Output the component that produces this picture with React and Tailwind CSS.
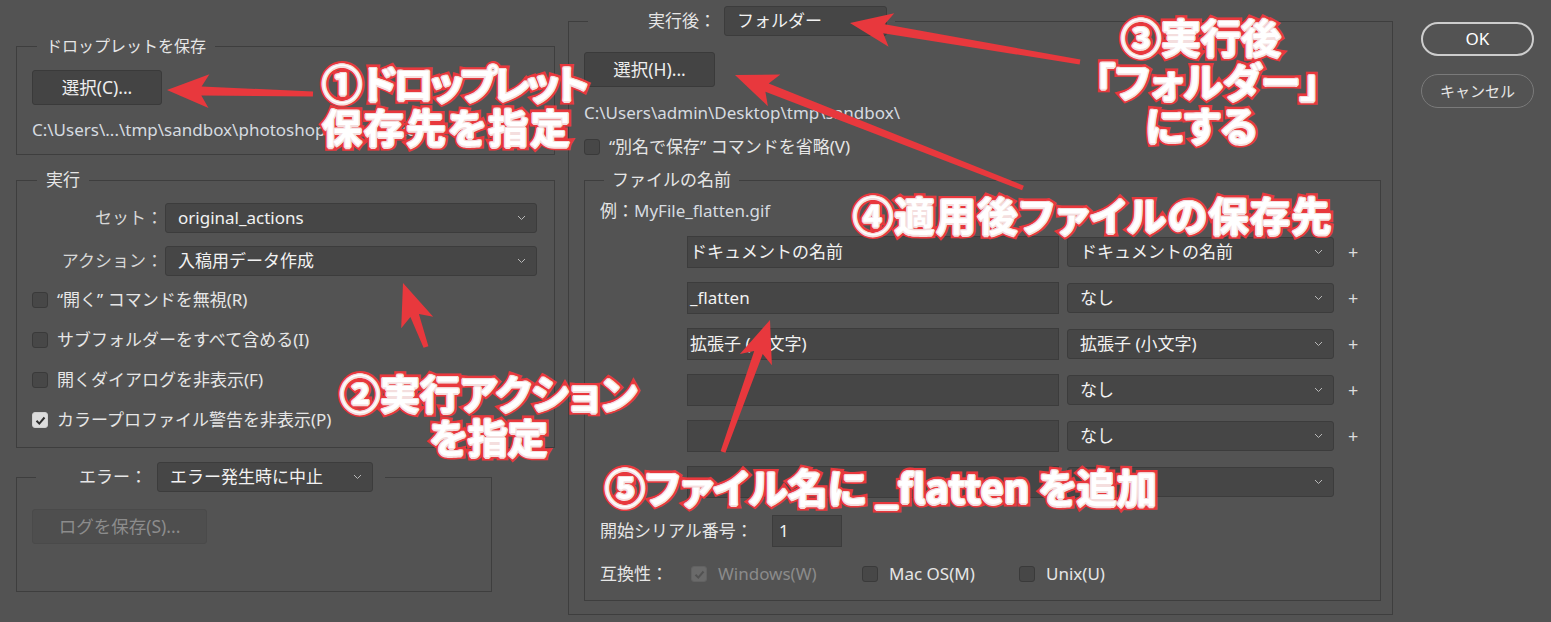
import React from 'react';

// Photoshop "バッチ / ドロップレットを作成" dialog with red annotations on top

const ui = "font-['Noto_Sans','Noto_Sans_CJK_JP',sans-serif]";

function Chevron() {
  return (
    <svg width="9" height="6" viewBox="0 0 9 6" className="shrink-0">
      <path d="M1 1l3.5 3.5L8 1" fill="none" stroke="#b8b8b8" strokeWidth="1" />
    </svg>
  );
}

function Select({ value, className = '' }) {
  return (
    <div
      className={`flex items-center justify-between rounded-[3px] border border-[#3c3c3c] bg-[#464646] pl-3 pr-2.5 text-[17px] text-[#f2f2f2] ${className}`}
    >
      <span className="truncate">{value}</span>
      <Chevron />
    </div>
  );
}

function Field({ value, className = '' }) {
  return (
    <div
      className={`flex h-8 items-center border border-[#3c3c3c] bg-[#464646] pl-[2px] text-[17px] text-[#f2f2f2] ${className}`}
    >
      {value}
    </div>
  );
}

function Check({ checked = false, disabled = false }) {
  const box = checked
    ? disabled
      ? 'bg-[#6a6a6a] border-[#626262]'
      : 'bg-[#dcdcdc] border-[#cfcfcf]'
    : 'bg-[#474747] border-[#3a3a3a]';
  return (
    <div className={`flex h-4 w-4 shrink-0 items-center justify-center rounded-[3px] border ${box}`}>
      {checked && (
        <svg width="11" height="11" viewBox="0 0 11 11">
          <path
            d="M1.5 5.8l2.8 2.8L9.5 2.5"
            fill="none"
            stroke={disabled ? '#525252' : '#2e2e2e'}
            strokeWidth="2"
          />
        </svg>
      )}
    </div>
  );
}

function CheckRow({ label, checked }) {
  return (
    <div className="flex h-6 items-center">
      <Check checked={checked} />
      <span className="ml-[9px] text-[#e6e6e6]">{label}</span>
    </div>
  );
}

function Button({ children, className = '', disabled = false }) {
  return (
    <button
      disabled={disabled}
      className={`h-[35px] rounded-[3px] border text-[17.5px] ${
        disabled
          ? 'border-[#4a4a4a] bg-[#4e4e4e] text-[#8c8c8c]'
          : 'border-[#3a3a3a] bg-[#444444] text-[#eeeeee]'
      } ${className}`}
    >
      {children}
    </button>
  );
}

function NameRow({ text, option, plus = true }) {
  return (
    <div className="flex h-8 items-center">
      <Field value={text} className="w-[372px]" />
      <Select value={option} className="ml-2 h-[30px] w-[267px]" />
      {plus && <span className="ml-[14px] text-[18px] leading-none text-[#dcdcdc]">+</span>}
    </div>
  );
}

function arrowPoints([x1, y1], [x2, y2], head = 42, half = 17, w0 = 2.5, w1 = 4.5) {
  const dx = x2 - x1;
  const dy = y2 - y1;
  const len = Math.hypot(dx, dy);
  const ux = dx / len;
  const uy = dy / len;
  const nx = -uy;
  const ny = ux;
  const bx = x2 - ux * head;
  const by = y2 - uy * head;
  const jx = x2 - ux * head * 0.82;
  const jy = y2 - uy * head * 0.82;
  const pts = [
    [x1 + nx * w0, y1 + ny * w0],
    [jx + nx * w1, jy + ny * w1],
    [bx + nx * half, by + ny * half],
    [x2, y2],
    [bx - nx * half, by - ny * half],
    [jx - nx * w1, jy - ny * w1],
    [x1 - nx * w0, y1 - ny * w0],
  ];
  return pts.map((p) => p.map((v) => v.toFixed(1)).join(',')).join(' ');
}

const arrows = [
  [[313, 94], [167, 90]],
  [[426, 347], [403, 283]],
  [[1080, 62], [850, 23]],
  [[1023, 188], [735, 75]],
  [[723, 452], [770, 320]],
];

// white lettering, red outline, thin light halo
function Note({ className = '', children }) {
  return (
    <div
      className={`pointer-events-none absolute whitespace-nowrap font-['Noto_Sans_CJK_JP',sans-serif] text-[40px] font-bold leading-[44px] text-white [font-feature-settings:'palt'] [paint-order:stroke_fill] [-webkit-text-stroke:7px_#e8383d] [text-shadow:1.5px_0_#f4dede,-1.5px_0_#f4dede,0_1.5px_#f4dede,0_-1.5px_#f4dede,1px_1px_#f4dede,-1px_-1px_#f4dede,1px_-1px_#f4dede,-1px_1px_#f4dede] ${className}`}
    >
      {children}
    </div>
  );
}

export default function App() {
  return (
    <div className={`relative flex h-[622px] w-[1551px] overflow-hidden bg-[#535353] text-[17px] text-[#e6e6e6] ${ui}`}>
      {/* left column */}
      <div className="ml-4 mt-[36px] flex w-[539px] flex-col items-start">
        <fieldset className="w-full border border-[#3e3e3e] pb-[14px] pl-[15px]">
          <legend className="ml-[5px] px-[9px] text-[16px] leading-5">ドロップレットを保存</legend>
          <Button className="mt-[14px] w-[130px]">選択(C)...</Button>
          <div className="mt-[15px] leading-5 text-[#d6dbe0]">{'C:\\Users\\...\\tmp\\sandbox\\photoshop\\flatten.exe'}</div>
        </fieldset>

        <fieldset className="mt-[15px] w-full border border-[#3e3e3e] pb-[15px] pl-[15px] pr-[17px]">
          <legend className="ml-[5px] px-[9px] leading-5">実行</legend>
          <div className="mt-[13px] flex items-center">
            <span className="w-[133px] pr-[2px] text-right text-[#d8d8d8]">セット：</span>
            <Select value="original_actions" className="h-[30px] flex-1" />
          </div>
          <div className="mt-[13px] flex items-center">
            <span className="w-[133px] pr-[2px] text-right text-[#d8d8d8]">アクション：</span>
            <Select value="入稿用データ作成" className="h-[30px] flex-1" />
          </div>
          <div className="mt-[12px] flex flex-col gap-[16px]">
            <CheckRow label="“開く” コマンドを無視(R)" />
            <CheckRow label="サブフォルダーをすべて含める(I)" />
            <CheckRow label="開くダイアログを非表示(F)" />
            <CheckRow label="カラープロファイル警告を非表示(P)" checked />
          </div>
        </fieldset>

        <fieldset className="mt-[14px] w-[476px] border border-[#3e3e3e] pb-[47px] pl-[15px]">
          <legend className="ml-[4px] px-3">
            <div className="flex items-center">
              <span className="w-[99px] text-right">エラー：</span>
              <Select value="エラー発生時に中止" className="ml-[10px] h-[30px] w-[216px]" />
            </div>
          </legend>
          <Button disabled className="mt-[17px] w-[175px]">ログを保存(S)...</Button>
        </fieldset>
      </div>

      {/* middle column */}
      <div className="ml-[13px] mt-[6px] flex w-[825px] flex-col">
        <fieldset className="border border-[#3e3e3e] pb-[13px] pl-[15px] pr-[11px]">
          <legend className="ml-[4px] px-2">
            <div className="flex items-center">
              <span className="w-[120px] text-right">実行後：</span>
              <Select value="フォルダー" className="ml-2 h-[30px] w-[163px]" />
            </div>
          </legend>
          <Button className="mt-[16px] w-[131px]">選択(H)...</Button>
          <div className="mt-[16px] leading-5 text-[#d6dbe0]">{'C:\\Users\\admin\\Desktop\\tmp\\sandbox\\'}</div>
          <div className="mt-[12px]">
            <CheckRow label="“別名で保存” コマンドを省略(V)" />
          </div>

          <fieldset className="mt-[11px] border border-[#3e3e3e] pb-[14px] pl-[15px]">
            <legend className="ml-[4px] px-[8px] leading-5">ファイルの名前</legend>
            <div className="mt-[11px] leading-5">
              例：<span className="text-[#d6dbe0]">MyFile_flatten.gif</span>
            </div>
            <div className="mt-[15px] flex flex-col gap-[14px] pl-[87px]">
              <NameRow text="ドキュメントの名前" option="ドキュメントの名前" />
              <NameRow text="_flatten" option="なし" />
              <NameRow text="拡張子 (小文字)" option="拡張子 (小文字)" />
              <NameRow text="" option="なし" />
              <NameRow text="" option="なし" />
              <NameRow text="" option="なし" plus={false} />
            </div>
            <div className="mt-[17px] flex items-center">
              <span className="w-[172px]">開始シリアル番号：</span>
              <Field value="1" className="w-[70px] pl-[6px]" />
            </div>
            <div className="mt-[15px] flex h-6 items-center">
              <span className="w-[91px]">互換性：</span>
              <div className="flex w-[171px] items-center">
                <Check checked disabled />
                <span className="ml-[11px] text-[#8b8b8b]">Windows(W)</span>
              </div>
              <div className="flex w-[157px] items-center">
                <Check />
                <span className="ml-[11px]">Mac OS(M)</span>
              </div>
              <div className="flex items-center">
                <Check />
                <span className="ml-[11px]">Unix(U)</span>
              </div>
            </div>
          </fieldset>
        </fieldset>
      </div>

      {/* right column */}
      <div className="ml-[28px] mt-[22px] flex w-[113px] flex-col gap-[18px]">
        <button className="h-[34px] rounded-full border-2 border-[#cdcdcd] text-[17px] text-white">OK</button>
        <button className="h-[34px] rounded-full border-[1.5px] border-[#7a7a7a] text-[15px] text-[#e6e6e6]">キャンセル</button>
      </div>

      {/* annotations */}
      <svg className="pointer-events-none absolute inset-0" width="1551" height="622">
        {arrows.map(([a, b], i) => (
          <polygon key={i} points={arrowPoints(a, b)} fill="#e8383d" />
        ))}
      </svg>
      <Note className="left-[322px] top-[60px]">
        ①<span className="tracking-[-4px]">ドロップレット</span>
        <br />
        <span className="tracking-[2px]">保存先を指定</span>
      </Note>
      <Note className="left-[340px] top-[370px] text-center">
        ②実行アクション
        <br />
        を指定
      </Note>
      <Note className="left-[1095px] top-[14px] w-[212px] text-center">
        ③実行後
        <br />
        「フォルダー」
        <br />
        にする
      </Note>
      <Note className="left-[853px] top-[192px] tracking-[1.5px]">④適用後ファイルの保存先</Note>
      <Note className="left-[605px] top-[464px]">⑤ファイル名に _flatten を追加</Note>
    </div>
  );
}
